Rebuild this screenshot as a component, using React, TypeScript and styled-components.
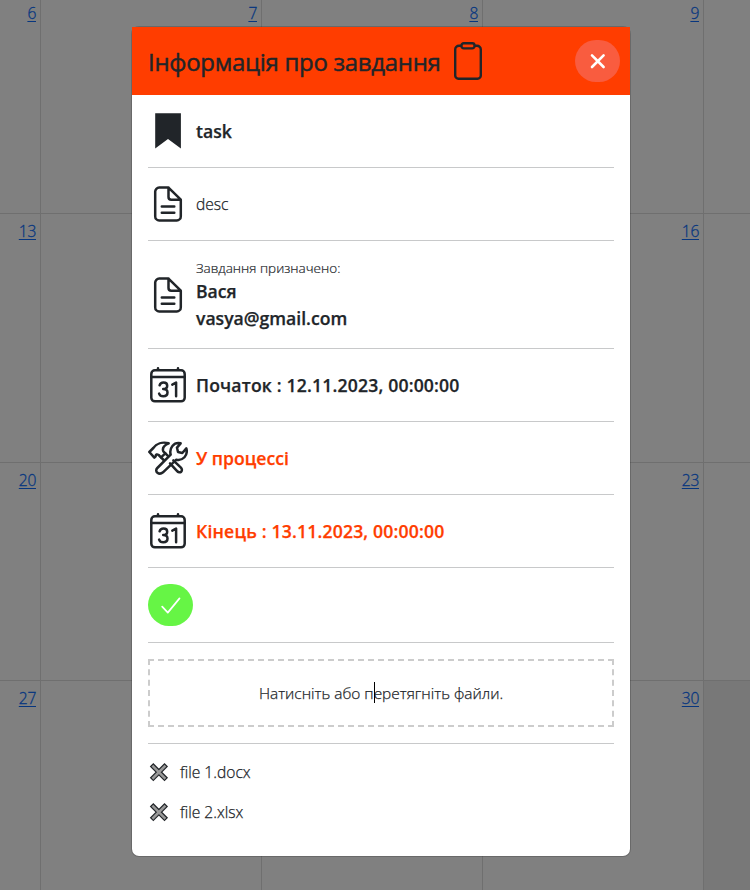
import React from "react";
import styled, { createGlobalStyle } from "styled-components";

const INK = "#212529";
const ACCENT = "#ff3d00";

const GlobalStyle = createGlobalStyle`
  * { box-sizing: border-box; }
  body {
    margin: 0;
    overflow: hidden;
    color: ${INK};
    font-family: "Open Sans", "Noto Sans", sans-serif;
    font-size: 16px;
    line-height: 24px;
  }
  svg { display: block; flex: none; }
`;

const Page = styled.div`
  position: relative;
  width: 750px;
  height: 890px;
  overflow: hidden;
  background: #808080;
`;

const Calendar = styled.div`
  display: grid;
  grid-template-columns: 41px 221px 221px 221px 60px;
  grid-template-rows: 214px 249px 218px 209px;
`;

const Day = styled.div<{ $muted?: boolean; $last?: boolean }>`
  display: flex;
  justify-content: flex-end;
  align-items: flex-start;
  padding: 4px 4px 0 0;
  border-right: 1px solid #6f6f6f;
  border-bottom: ${(p) => (p.$last ? "0" : "1px solid #6f6f6f")};
  background: ${(p) => (p.$muted ? "#787878" : "transparent")};
`;

const DayLink = styled.a<{ $first?: boolean }>`
  margin-top: ${(p) => (p.$first ? "-3px" : "1px")};
  color: #07367f;
  font-weight: 300;
  font-size: 15.6px;
  letter-spacing: -0.3px;
  -webkit-text-stroke: 0.3px #07367f;
  text-decoration: underline;
  text-underline-offset: 2px;
`;

const Overlay = styled.div`
  position: absolute;
  inset: 0;
  display: flex;
  justify-content: center;
  align-items: flex-start;
  padding: 26px 0 0 12px;
`;

const Modal = styled.div`
  width: 500px;
  height: 831px;
  border: 1px solid rgba(0, 0, 0, 0.175);
  border-radius: 8px;
  background: #fff;
  background-clip: padding-box;
`;

const Header = styled.header`
  display: flex;
  align-items: center;
  height: 68px;
  padding: 0 10px 0 16px;
  background: ${ACCENT};
`;

const Title = styled.h1`
  width: 300px;
  margin: 1px 0 0;
  font-size: 24px;
  letter-spacing: -0.3px;
  line-height: 36px;
  font-weight: 400;
  -webkit-text-stroke: 0.45px ${INK};
  white-space: nowrap;
`;

const RoundButton = styled.button<{ $tone: string }>`
  display: flex;
  align-items: center;
  justify-content: center;
  width: 45px;
  height: 42px;
  padding: 0;
  border: 0;
  border-radius: 21px;
  background: ${(p) => p.$tone};
`;

const CloseSlot = styled.div`
  margin-left: auto;
`;

const Body = styled.div`
  padding: 0 16px;
`;

const Row = styled.section`
  display: flex;
  align-items: center;
  gap: 8px;
  padding: 16px 0;
  border-bottom: 1px solid #c8c9ca;
`;

const Strong = styled.strong<{ $accent?: boolean; $dated?: boolean }>`
  display: block;
  font-size: 17.6px;
  line-height: 27px;
  font-weight: 600;
  letter-spacing: ${(p) => (p.$dated ? "0.18px" : "0")};
  color: ${(p) => (p.$accent ? ACCENT : INK)};
  -webkit-text-stroke: 0.25px currentColor;
  white-space: nowrap;
`;

const Plain = styled.span`
  font-size: 15.6px;
  font-weight: 300;
  -webkit-text-stroke: 0.25px ${INK};
`;

const Caption = styled.div`
  padding-top: 1px;
  font-size: 13.5px;
  line-height: 20px;
  font-weight: 300;
  -webkit-text-stroke: 0.2px ${INK};
`;

const DropZone = styled.div`
  position: relative;
  display: flex;
  align-items: center;
  justify-content: center;
  width: 466px;
  height: 68px;
  border: 2px dashed #ccc;
  font-size: 15.45px;
  font-weight: 300;
  -webkit-text-stroke: 0.25px ${INK};
`;

const Caret = styled.i`
  position: absolute;
  left: 224px;
  top: 21px;
  width: 1px;
  height: 21px;
  background: #000;
`;

const Files = styled.ul`
  margin: 0;
  padding: 8px 0 0;
  list-style: none;
`;

const FileItem = styled.li`
  display: flex;
  align-items: center;
  gap: 10px;
  height: 40px;
`;

const ClipboardIcon = () => (
  <svg width="40" height="40" viewBox="0 0 40 40" fill="none" stroke={INK} strokeWidth="2.4">
    <path d="M13.5 4.7H11A3.8 3.8 0 0 0 7.2 8.5v26a3.2 3.2 0 0 0 3.2 3.2h19.2a3.2 3.2 0 0 0 3.2-3.2v-26A3.8 3.8 0 0 0 29 4.7H26.5" />
    <rect x="13.5" y="2.2" width="13" height="5.2" rx="2.2" />
  </svg>
);

const CloseIcon = () => (
  <svg width="16" height="16" viewBox="0 0 16 16" fill="none" stroke="#fff" strokeWidth="2.6" strokeLinecap="round">
    <path d="M2 2.4 13.6 14M13.6 2.4 2 14" />
  </svg>
);

const BookmarkIcon = () => (
  <svg width="40" height="40" viewBox="0 0 40 40" fill={INK}>
    <path d="M7.2 2.2h25.700v35.300L20 28 7.200 37.500z" />
  </svg>
);

const DocumentIcon = () => (
  <svg width="40" height="40" viewBox="0 0 40 40" fill="none" stroke={INK} strokeWidth="2.5" strokeLinejoin="round" strokeLinecap="round">
    <path d="M20.500 3.600H11.200a4 4 0 0 0-4 4v24.800a4 4 0 0 0 4 4h17.600a4 4 0 0 0 4-4V15.700L20.500 3.600V13a2.700 2.700 0 0 0 2.700 2.700h9.600" />
    <path d="M13.800 22.500h12.500M13.800 28.700h12.500" />
  </svg>
);

const CalendarIcon = () => (
  <svg width="40" height="40" viewBox="0 0 40 40" fill="none" stroke={INK} strokeWidth="2.5" strokeLinecap="round">
    <rect x="3.300" y="5.300" width="33.400" height="31" rx="3.600" />
    <path d="M3.300 11.900h33.400" />
    <path d="M10 3.200v1.500M30 3.200v1.500" />
    <path strokeLinejoin="round" d="M11.600 20.300c.6-2 2-2.800 3.900-2.800 2.300 0 3.700 1.200 3.700 3.200 0 2.200-1.400 3.300-4 3.300 2.900 0 4.300 1.400 4.300 3.600 0 2.400-1.700 3.700-4.200 3.700-2.300 0-3.600-.9-4.200-2.700M24.300 19.600l3.800-2.100v13.800" />
  </svg>
);

const ToolsIcon = () => (
  <svg width="40" height="40" viewBox="0 0 120 120" fill="none" stroke={INK} strokeWidth="7.500" strokeLinejoin="round" strokeLinecap="round">
    <path d="M4 42 16 30C25 17 43 11 62 16C48 22 42 30 46 40L52 46L39 58L32 51C27 48 23 49 23 55L19 59z" />
    <path d="M52 46 59 53M39 58 47 66M66 76 86 98C96 110 108 98 98 88L76 67" />
    <path d="M28 90 68 50C63 31 77 11 98 16L87 29L90 42L103 45L115 31C121 53 104 69 85 65L45 103C33 113 18 100 28 90z" />
  </svg>
);

const CheckIcon = () => (
  <svg width="20" height="18" viewBox="0 0 20 18" fill="none" stroke="#fff" strokeWidth="1.7" strokeLinecap="round" strokeLinejoin="round">
    <path d="M1.200 10.700 6.800 16.600 18.500 2.400" />
  </svg>
);

const RemoveIcon = () => (
  <svg width="22" height="22" viewBox="0 0 22 22" fill="none" strokeLinecap="square">
    <path stroke={INK} strokeWidth="5" d="m5.300 5.600 11.200 11.200M16.500 5.600 5.300 16.800" />
    <path stroke="#999" strokeWidth="2.6" d="m5.300 5.600 11.200 11.200M16.500 5.600 5.300 16.800" />
  </svg>
);

const weeks = [
  ["6", "7", "8", "9", ""],
  ["13", "", "", "16", ""],
  ["20", "", "", "23", ""],
  ["27", "", "", "30", ""],
];

export default function App() {
  return (
    <Page>
      <GlobalStyle />
      <Calendar>
        {weeks.map((week, w) =>
          week.map((day, d) => (
            <Day key={`${w}-${d}`} $muted={w === 3 && d === 4} $last={w === 3}>
              {day && <DayLink $first={w === 0}>{day}</DayLink>}
            </Day>
          ))
        )}
      </Calendar>
      <Overlay>
        <Modal>
          <Header>
            <Title>Інформація про завдання</Title>
            <ClipboardIcon />
            <CloseSlot>
              <RoundButton $tone="#f95c3f" aria-label="Закрити">
                <CloseIcon />
              </RoundButton>
            </CloseSlot>
          </Header>
          <Body>
            <Row>
              <BookmarkIcon />
              <Strong>task</Strong>
            </Row>
            <Row>
              <DocumentIcon />
              <Plain>desc</Plain>
            </Row>
            <Row>
              <DocumentIcon />
              <div>
                <Caption>Завдання призначено:</Caption>
                <Strong>Вася</Strong>
                <Strong>vasya@gmail.com</Strong>
              </div>
            </Row>
            <Row>
              <CalendarIcon />
              <Strong $dated>Початок : 12.11.2023, 00:00:00</Strong>
            </Row>
            <Row>
              <ToolsIcon />
              <Strong $accent>У процессі</Strong>
            </Row>
            <Row>
              <CalendarIcon />
              <Strong $accent $dated>Кінець : 13.11.2023, 00:00:00</Strong>
            </Row>
            <Row>
              <RoundButton $tone="#66f545" aria-label="Виконано">
                <CheckIcon />
              </RoundButton>
            </Row>
            <Row>
              <DropZone>
                Натисніть або перетягніть файли.
                <Caret />
              </DropZone>
            </Row>
            <Files>
              {["file 1.docx", "file 2.xlsx"].map((name) => (
                <FileItem key={name}>
                  <RemoveIcon />
                  <Plain>{name}</Plain>
                </FileItem>
              ))}
            </Files>
          </Body>
        </Modal>
      </Overlay>
    </Page>
  );
}
